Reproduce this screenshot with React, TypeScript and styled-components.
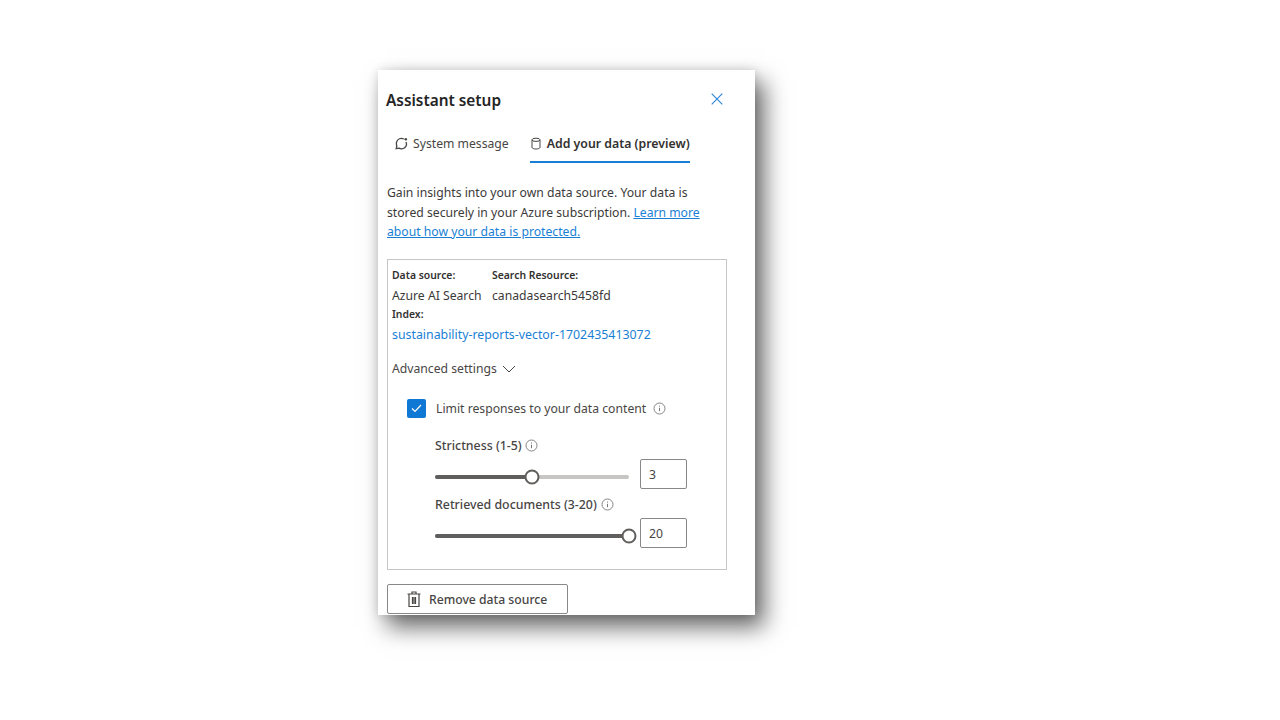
import styled, { createGlobalStyle } from "styled-components";

const GlobalStyle = createGlobalStyle`
  html, body {
    margin: 0;
    background: #ffffff;
    font-family: "Noto Sans", "Open Sans", "Liberation Sans", sans-serif;
    color: #323130;
  }
`;

const Page = styled.div`
  width: 1280px;
  height: 720px;
  overflow: hidden;
  box-sizing: border-box;
  padding: 70px 0 0 378px;
`;

const Panel = styled.section`
  width: 377px;
  height: 545px;
  box-sizing: border-box;
  padding: 0 28px 0 9px;
  background: #ffffff;
  overflow: hidden;
  box-shadow: 9px 12px 22px rgba(0, 0, 0, 0.6), 0 0 10px rgba(0, 0, 0, 0.12);
`;

const Header = styled.header`
  display: flex;
  align-items: center;
  justify-content: space-between;
  height: 60px;
  margin-left: -1px;
`;

const Title = styled.h2`
  margin: 0;
  font-size: 15.4px;
  font-weight: 600;
  color: #242424;
`;

const CloseButton = styled.button`
  display: flex;
  margin: 0 4px 2px 0;
  padding: 0;
  border: none;
  background: none;
  color: #2b85d8;
`;

const Tabs = styled.nav`
  display: flex;
  gap: 21px;
  margin: 1px 0 0 8px;
  height: 32px;
`;

const Tab = styled.div<{ $active?: boolean }>`
  display: flex;
  align-items: center;
  gap: 5px;
  height: 32px;
  box-sizing: border-box;
  padding-bottom: 6px;
  font-size: ${(p) => (p.$active ? 12.3 : 12.2)}px;
  font-weight: ${(p) => (p.$active ? 600 : 400)};
  color: ${(p) => (p.$active ? "#323130" : "#484644")};
  border-bottom: 2px solid ${(p) => (p.$active ? "#1a7fd4" : "transparent")};
`;

const Intro = styled.p`
  margin: 20px 0 17px;
  padding-right: 18px;
  font-size: 12.2px;
  line-height: 19.5px;
  color: #3b3a39;
`;

const Link = styled.a`
  color: #1a7fd4;
  text-decoration: underline;
`;

const SourceBox = styled.div`
  width: 340px;
  height: 311px;
  box-sizing: border-box;
  padding: 5px 4px 0;
  border: 1px solid #c8c6c4;
`;

const SourceGrid = styled.div`
  display: grid;
  grid-template-columns: 100px 1fr;
`;

const FieldLabel = styled.div`
  font-size: 10.4px;
  font-weight: 600;
  line-height: 20px;
  color: #323130;
`;

const FieldValue = styled.div`
  padding-top: 2px;
  font-size: 12.2px;
  line-height: 17px;
  white-space: nowrap;
  color: #3b3a39;
`;

const IndexLink = styled(FieldValue)`
  font-size: 12.35px;
  color: #1a7fd4;
`;

const AdvancedToggle = styled.div`
  display: flex;
  align-items: center;
  gap: 5px;
  margin-top: 16px;
  font-size: 12.2px;
  line-height: 20px;
  color: #484644;
`;

const Settings = styled.div`
  padding: 20px 0 0 15px;
`;

const CheckRow = styled.div`
  display: flex;
  align-items: center;
  height: 20px;
  font-size: 12.2px;
  color: #484644;
`;

const CheckBox = styled.span`
  display: flex;
  align-items: center;
  justify-content: center;
  width: 19px;
  height: 19px;
  margin-right: 10px;
  border-radius: 2px;
  background: #0f78d4;
`;

const InfoWrap = styled.span<{ $gap: number }>`
  display: flex;
  margin-left: ${(p) => p.$gap}px;
  color: #797775;
`;

const SliderGroup = styled.div`
  padding: 11px 0 0 28px;
`;

const SliderLabel = styled.div`
  display: flex;
  align-items: center;
  height: 20px;
  margin-top: 6px;
  font-size: 12.35px;
  font-weight: 500;
  color: #484644;
`;

const SliderRow = styled.div`
  display: flex;
  align-items: center;
  gap: 11px;
  margin-top: 3px;
  height: 30px;
`;

const Track = styled.div`
  position: relative;
  width: 194px;
  height: 4px;
  margin-top: 6px;
  border-radius: 2px;
  background: #c8c6c4;
`;

const Fill = styled.div`
  height: 100%;
  border-radius: 2px;
  background: #605e5c;
`;

const Thumb = styled.span`
  position: absolute;
  top: 50%;
  width: 15px;
  height: 15px;
  box-sizing: border-box;
  transform: translate(-50%, -50%);
  border: 2px solid #605e5c;
  border-radius: 50%;
  background: #ffffff;
`;

const NumberBox = styled.div`
  width: 47px;
  height: 30px;
  box-sizing: border-box;
  padding-left: 8px;
  border: 1px solid #8a8886;
  border-radius: 2px;
  font-size: 12.2px;
  line-height: 30px;
  color: #484644;
`;

const RemoveButton = styled.button`
  display: flex;
  align-items: center;
  gap: 8px;
  width: 181px;
  height: 30px;
  margin: 14px 0 0;
  padding: 1px 0 0 19px;
  box-sizing: border-box;
  border: 1px solid #8a8886;
  border-radius: 2px;
  background: #ffffff;
  font-family: inherit;
  font-size: 12.2px;
  font-weight: 500;
  color: #484644;
`;

const Info = ({ gap }: { gap: number }) => (
  <InfoWrap $gap={gap}>
    <svg width="13" height="13" viewBox="0 0 13 13" fill="none" stroke="currentColor">
      <circle cx="6.5" cy="6.5" r="5.5" strokeWidth="0.9" />
      <path d="M6.5 5.8v3.4" strokeWidth="1" />
      <path d="M6.5 3.6v1" strokeWidth="1" />
    </svg>
  </InfoWrap>
);

const Slider = ({ percent, value }: { percent: number; value: string }) => (
  <SliderRow>
    <Track>
      <Fill style={{ width: `${percent}%` }} />
      <Thumb style={{ left: `${percent}%` }} />
    </Track>
    <NumberBox>{value}</NumberBox>
  </SliderRow>
);

export default function App() {
  return (
    <Page>
      <GlobalStyle />
      <Panel>
        <Header>
          <Title>Assistant setup</Title>
          <CloseButton aria-label="Close">
            <svg width="12" height="12" viewBox="0 0 12 12" fill="none" stroke="currentColor" strokeWidth="1.1">
              <path d="M.7.7l10.600 10.600M11.300.7L.7 11.300" />
            </svg>
          </CloseButton>
        </Header>
        <Tabs>
          <Tab>
            <svg width="13" height="13" viewBox="0 0 13 13" fill="none" stroke="#484644" strokeWidth="1.3">
              <path d="M8.800 2A5 5 0 0 0 1.600 5c-.6 2 .1 3.600.2 4l-.6 2.600 2.700-.5c1 .6 4 1.300 6-.6 1.700-1.600 1.800-4 1-5.500" />
              <circle cx="10.800" cy="2.300" r="1.300" fill="#484644" stroke="none" />
            </svg>
            System message
          </Tab>
          <Tab $active>
            <svg width="12" height="13" viewBox="0 0 12 13" fill="none" stroke="#484644" strokeWidth="1">
              <ellipse cx="6" cy="2.800" rx="4" ry="1.600" />
              <path d="M2 2.800v7.600c0 .9 1.800 1.600 4 1.600s4-.7 4-1.600V2.800" />
            </svg>
            Add your data (preview)
          </Tab>
        </Tabs>
        <Intro>
          Gain insights into your own data source. Your data is stored securely in your Azure
          subscription. <Link>Learn more about how your data is protected.</Link>
        </Intro>
        <SourceBox>
          <SourceGrid>
            <FieldLabel>Data source:</FieldLabel>
            <FieldLabel>Search Resource:</FieldLabel>
            <FieldValue>Azure AI Search</FieldValue>
            <FieldValue>canadasearch5458fd</FieldValue>
          </SourceGrid>
          <FieldLabel>Index:</FieldLabel>
          <IndexLink>sustainability-reports-vector-1702435413072</IndexLink>
          <AdvancedToggle>
            Advanced settings
            <svg width="14" height="8" viewBox="0 0 14 8" fill="none" stroke="#484644" strokeWidth="1">
              <path d="M1 1l6 6 6-6" />
            </svg>
          </AdvancedToggle>
          <Settings>
            <CheckRow>
              <CheckBox>
                <svg width="11" height="9" viewBox="0 0 11 9" fill="none" stroke="#ffffff" strokeWidth="1.2">
                  <path d="M1 4.500l3 3 6-6.500" />
                </svg>
              </CheckBox>
              Limit responses to your data content
              <Info gap={7} />
            </CheckRow>
            <SliderGroup>
              <SliderLabel>
                Strictness (1-5)
                <Info gap={3} />
              </SliderLabel>
              <Slider percent={50} value="3" />
              <SliderLabel>
                Retrieved documents (3-20)
                <Info gap={4} />
              </SliderLabel>
              <Slider percent={100} value="20" />
            </SliderGroup>
          </Settings>
        </SourceBox>
        <RemoveButton>
          <svg width="14" height="17" viewBox="0 0 14 17" fill="none" stroke="#484644" strokeWidth="1.2">
            <path d="M0.500 3h13M5 3V1h4v2M2 3v12.500h10V3" />
            <path d="M5.500 6v7M7 6v7M8.500 6v7" />
          </svg>
          Remove data source
        </RemoveButton>
      </Panel>
    </Page>
  );
}
